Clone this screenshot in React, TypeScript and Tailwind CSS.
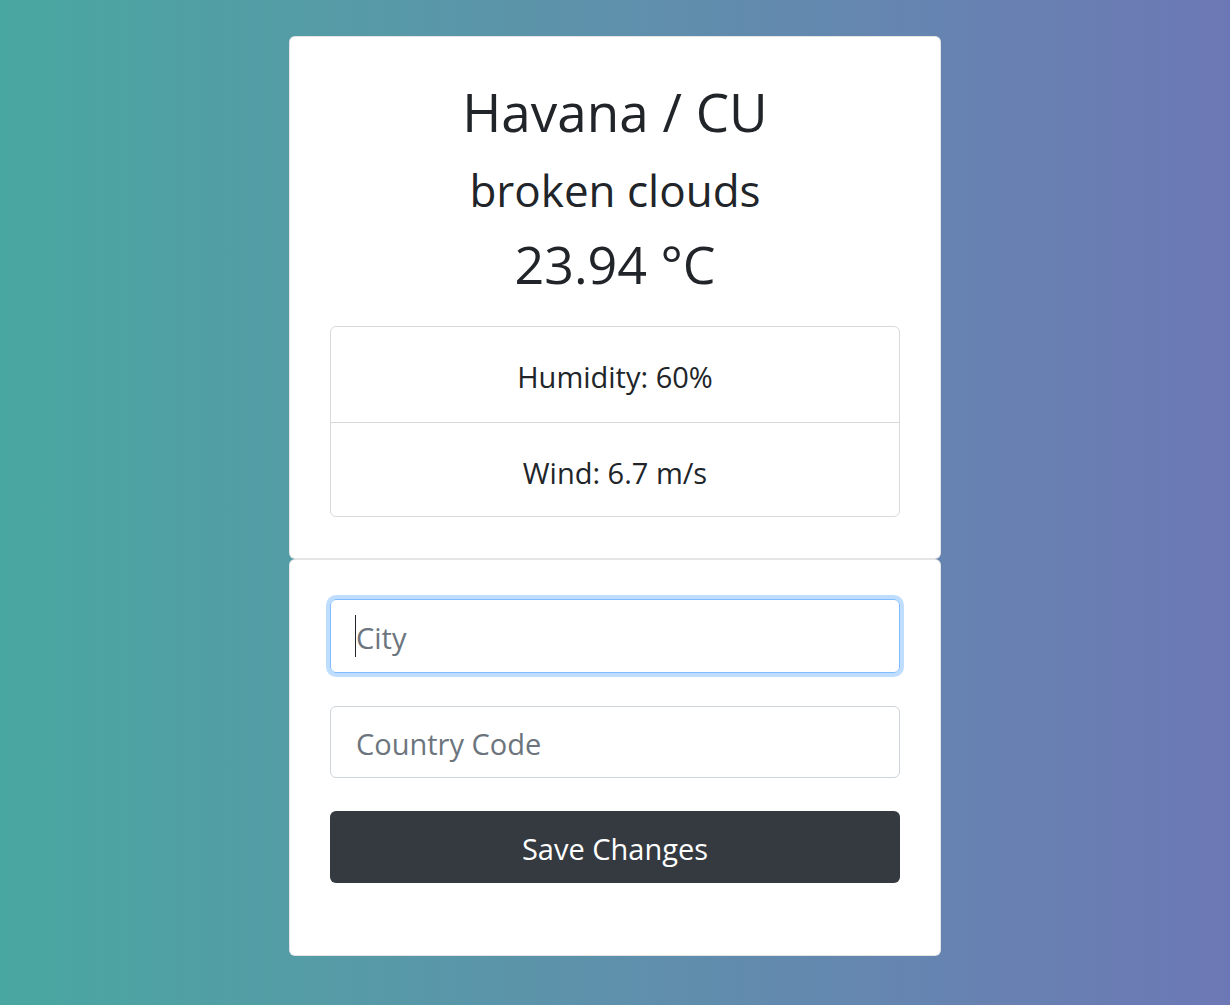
import React from 'react';

const font = { fontFamily: '"Open Sans", "Noto Sans", sans-serif' };

const WeatherApp = () => {
  return (
    <div
      className="min-h-screen w-full bg-linear-to-r from-[#48a7a0] to-[#6c78b5] pt-[36px] text-[#212529]"
      style={font}
    >
      <div className="mx-auto flex w-[652px] flex-col">
        {/* Weather card */}
        <div className="rounded-[6px] border border-black/10 bg-white px-[40px] pt-[39px] pb-[41px] text-center">
          <h2 className="mb-[15px] text-[53px] leading-[72px] font-normal">Havana / CU</h2>
          <h4 className="mb-[15px] text-[44px] leading-[54px] font-normal">broken clouds</h4>
          <h3 className="mb-[31px] text-[52px] leading-[63px] font-normal">23.94 °C</h3>

          <ul className="rounded-[6px] border border-black/15">
            <li className="pt-[27px] pb-[23px] text-[29px] leading-[45px]">Humidity: 60%</li>
            <li className="border-t border-black/15 pt-[27px] pb-[21px] text-[29px] leading-[45px]">Wind: 6.7 m/s</li>
          </ul>
        </div>

        {/* Form card */}
        <div className="rounded-[6px] border border-black/10 bg-white px-[40px] pt-[39px] pb-[72px]">
          <div className="relative mb-[33px]">
            <input
              placeholder="City"
              className="h-[74px] w-full rounded-[6px] border border-[#80bdff] px-[25px] pt-[3px] text-[29px] caret-transparent outline-none shadow-[0_0_0_4px_rgba(0,123,255,0.25)] placeholder:text-[#6c757d]"
              style={font}
            />
            <span className="absolute top-[16px] left-[25px] h-[42px] w-[1px] bg-[#212529]" />
          </div>
          <input
            placeholder="Country Code"
            className="mb-[33px] h-[72px] w-full rounded-[6px] border border-[#ced4da] px-[25px] pt-[3px] text-[29px] outline-none placeholder:text-[#6c757d]"
            style={font}
          />
          <button className="h-[72px] w-full rounded-[6px] bg-[#343a40] pt-[3px] text-[29px] text-white">
            Save Changes
          </button>
        </div>
      </div>
    </div>
  );
};

export default WeatherApp;
